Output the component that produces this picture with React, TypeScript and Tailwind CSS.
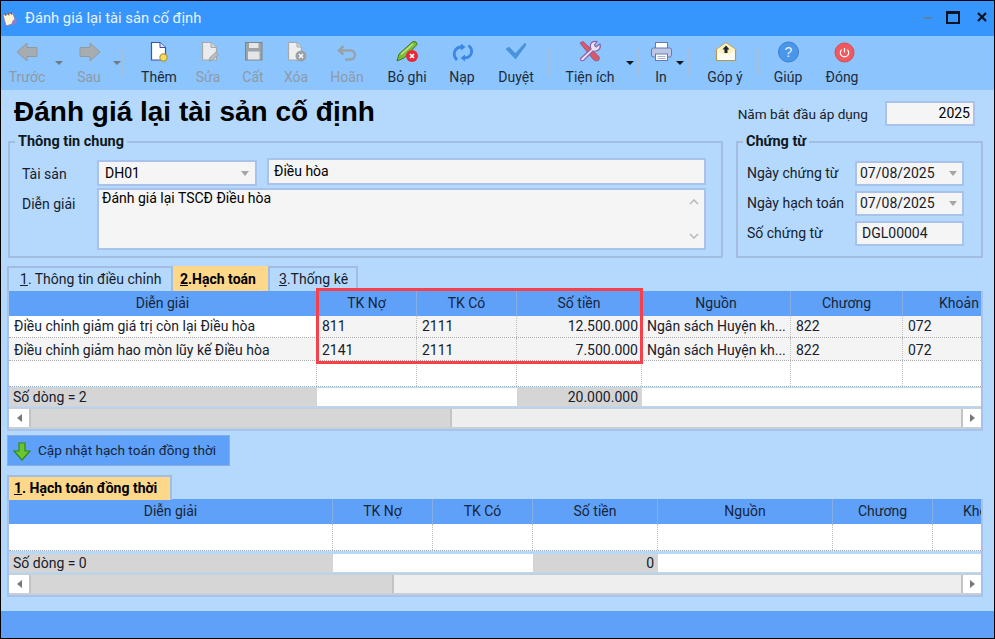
import type { ReactNode } from "react";

const ui = "font-['Roboto','Liberation_Sans',sans-serif]";

const Icons: Record<string, ReactNode> = {
  back: <path d="M2 10 L12 1 V5.5 H22 V14.5 H12 V19 Z" fill="#a7acb0" stroke="#939a9f" />,
  next: <path d="M23 10 L13 1 V5.5 H3 V14.5 H13 V19 Z" fill="#a7acb0" stroke="#939a9f" />,
  add: (
    <>
      <path d="M4.5 0.5 H13 L18.5 5.5 V18 H4.5 Z" fill="#fff" stroke="#3f51a8" strokeWidth="1.2" />
      <path d="M13 0.5 V5.5 H18.5" fill="#dfe6f5" stroke="#3f51a8" />
      <circle cx="16.5" cy="15.5" r="3.6" fill="#f6d95d" stroke="#b29a3a" strokeWidth="1.2" />
    </>
  ),
  edit: (
    <>
      <path d="M6.5 0.5 H15 L20.5 5.5 V18 H6.5 Z" fill="#e9ebec" stroke="#a3a9ad" strokeWidth="1.2" />
      <path d="M15 0.5 V5.5 H20.5" fill="#d3d6d8" stroke="#a3a9ad" />
      <path d="M13 19 L14 15.5 L20 10 L22.5 12.5 L16.5 18 Z" fill="#b9bec1" stroke="#9ba1a5" />
    </>
  ),
  save: (
    <>
      <rect x="4.5" y="0.5" width="16.5" height="17.5" fill="#9da3a7" stroke="#7f868b" />
      <rect x="8" y="1" width="9.5" height="5" fill="#e4e6e7" />
      <rect x="7" y="9.5" width="11.5" height="8" fill="#e3e5e6" />
    </>
  ),
  del: (
    <>
      <path d="M4.5 0.5 H13 L17.5 5 V18 H4.5 Z" fill="#eceeef" stroke="#a3a9ad" strokeWidth="1.2" />
      <path d="M13 0.5 V5 H17.5" fill="#d3d6d8" stroke="#a3a9ad" />
      <circle cx="17" cy="14" r="5.5" fill="#9ba1a5" />
      <path d="M15 12 L19 16 M19 12 L15 16" stroke="#fff" strokeWidth="1.4" />
    </>
  ),
  undo: (
    <path d="M8.5 4 L4 8.5 L8.5 12.5 M4.5 8.5 H15.5 A4.5 4.5 0 0 1 15.5 17.5 H10" fill="none" stroke="#9aa1a6" strokeWidth="2.4" />
  ),
  cancel: (
    <>
      <path d="M2 19 L4 12 L18 -0.5 Q22 -1 22 2.5 L9 16 Z" fill="#7dbb3a" stroke="#3f7a1c" />
      <path d="M6 12.5 L18 2" stroke="#c8e79a" strokeWidth="1.4" />
      <circle cx="17" cy="14" r="6" fill="#e6283a" />
      <path d="M15 12 L19 16 M19 12 L15 16" stroke="#fff" strokeWidth="1.7" />
    </>
  ),
  reload: (
    <>
      <path d="M7 18 C2 13 4 5 12 5" fill="none" stroke="#3b86e6" strokeWidth="2.8" />
      <path d="M11 1.5 L15.5 5 L11 8.5 Z" fill="#3b86e6" />
      <path d="M18.5 3.5 C24 8 22 16 14 16" fill="none" stroke="#3b86e6" strokeWidth="2.8" />
      <path d="M15 12.5 L10.5 16 L15 19.5 Z" fill="#3b86e6" />
    </>
  ),
  check: <path d="M2 7 L5 5 L11.5 11.5 L21 1 L22 3 L11.5 17 Z" fill="#4a93dc" stroke="#3f86cf" strokeWidth="0.5" />,
  tools: (
    <g transform="translate(0 -2)">
      <path d="M2 3 L5 1.5 L19.5 15 Q23 19 20 20.5 Q17.5 22 15 19 Z" fill="#e0585f" stroke="#8b5a9e" />
      <path d="M22 4 L18 7 L16.5 5 L19 1.5 Q14 0.5 12.5 4.5 Q12 7 13 9 L2.5 18.5 Q2.5 21.5 5.5 20.5 L15 11 Q19 12 21.5 9 Q23 6.5 22 4 Z" fill="#ece2f4" stroke="#8a63a8" strokeWidth="1.2" />
    </g>
  ),
  print: (
    <g transform="translate(0.5 -2)">
      <rect x="6" y="2.5" width="12" height="7" fill="#fff" stroke="#6a78b0" />
      <rect x="2" y="8" width="20" height="9" rx="2" fill="#bcc7e6" stroke="#6a78b0" />
      <rect x="6" y="14" width="12" height="6.5" fill="#fff" stroke="#6a78b0" />
      <path d="M8 16.5 H16 M8 18.5 H16" stroke="#a7b1cf" />
    </g>
  ),
  mail: (
    <>
      <path d="M3.5 7.5 L13 1 L22.5 7.5 V18.5 H3.5 Z" fill="#fffdf2" stroke="#b79a45" strokeWidth="1.2" />
      <path d="M3.5 7.5 L13 1 L22.5 7.5 L17 12 H9 Z" fill="#fff0bd" />
      <path d="M13 3.5 L16.5 7.5 H14.5 V11 H11.5 V7.5 H9.5 Z" fill="#1d2430" />
    </>
  ),
  help: (
    <>
      <circle cx="12.5" cy="10" r="10" fill="#4a96ea" stroke="#3b7fd0" />
      <text x="12.5" y="15" textAnchor="middle" fontSize="14" fill="#e8f2fd" fontFamily="Liberation Sans">?</text>
    </>
  ),
  power: (
    <>
      <circle cx="14.5" cy="10.5" r="9.5" fill="#ee5a5f" stroke="#e0484e" />
      <path d="M11.7 7.6 A4.2 4.2 0 1 0 17.3 7.6" fill="none" stroke="#fff" strokeWidth="1.2" />
      <path d="M14.5 6 V10.5" stroke="#fff" strokeWidth="1.2" />
    </>
  ),
};

function Tool({ w, icon, label, off }: { w: string; icon: string; label: string; off?: boolean }) {
  return (
    <div className={`${w} flex shrink-0 flex-col items-center`}>
      <svg viewBox="0 0 24 24" className="h-6 w-6 overflow-visible">
        {Icons[icon]}
      </svg>
      <span className={`mt-[2px] text-[14px] leading-[19px] ${off ? "text-[#8f9aa6]" : "text-[#1c2b3a]"}`}>{label}</span>
    </div>
  );
}

function Caret({ w, off }: { w: string; off?: boolean }) {
  return (
    <div className={`${w} flex shrink-0 justify-center pt-[19px]`}>
      <div
        className={`h-0 w-0 shrink-0 border-x-[4px] border-t-[4px] border-x-transparent ${off ? "border-t-[#6f7b86]" : "border-t-[#10181f]"}`}
      />
    </div>
  );
}

function Sep() {
  return <div className="mt-[6px] h-[29px] w-[2px] shrink-0 bg-[#a4bfdc]" />;
}

const fieldBorder = "border-2 border-[#a9c2ec] bg-[#f5f5f5]";

function Arrow() {
  return <div className="h-0 w-0 border-x-[4px] border-t-[5px] border-x-transparent border-t-[#a5a5a5]" />;
}

function DateField({ value }: { value: string }) {
  return (
    <div className={`flex h-[25px] w-[109px] items-center justify-between pl-[3px] pr-[5px] text-[14px] ${fieldBorder}`}>
      <span>{value}</span>
      <Arrow />
    </div>
  );
}

function Legend({ children }: { children: ReactNode }) {
  return (
    <span className="absolute left-[5px] top-[-10px] bg-[#b5d9fd] px-[3px] text-[14.5px] font-bold leading-[18px] text-[#101820]">
      {children}
    </span>
  );
}

type Col = { title: string; w: string; right?: boolean };

const cols1: Col[] = [
  { title: "Diễn giải", w: "w-[308px]" },
  { title: "TK Nợ", w: "w-[100px]" },
  { title: "TK Có", w: "w-[100px]" },
  { title: "Số tiền", w: "w-[125px]", right: true },
  { title: "Nguồn", w: "w-[149px]" },
  { title: "Chương", w: "w-[112px]" },
  { title: "Khoản", w: "w-[112px]" },
];

const cols2: Col[] = [
  { title: "Diễn giải", w: "w-[324px]" },
  { title: "TK Nợ", w: "w-[100px]" },
  { title: "TK Có", w: "w-[100px]" },
  { title: "Số tiền", w: "w-[125px]", right: true },
  { title: "Nguồn", w: "w-[175px]" },
  { title: "Chương", w: "w-[100px]" },
  { title: "Khoản", w: "w-[100px]" },
];

function Header({ cols }: { cols: Col[] }) {
  return (
    <div className="flex h-[25px] overflow-hidden bg-[#5fa0f9]">
      {cols.map((c) => (
        <div
          key={c.title}
          className={`${c.w} shrink-0 overflow-hidden whitespace-nowrap border-r border-[#86aee4] text-center text-[14px] leading-[25px] text-[#16263a] last:border-r-0`}
        >
          {c.title}
        </div>
      ))}
    </div>
  );
}

function Row({ cols, cells, h, lh, firstBg }: { cols: Col[]; cells: string[]; h: string; lh: string; firstBg?: string }) {
  return (
    <div className={`flex ${h} overflow-hidden border-b border-dotted border-[#a9a9a9]`}>
      {cols.map((c, i) => (
        <div
          key={c.title}
          className={`${c.w} ${lh} shrink-0 overflow-hidden whitespace-nowrap border-r border-dotted border-[#bdbdbd] text-[14px] text-[#16202c] last:border-r-0 ${
            c.right ? "pl-[5px] pr-[3px] text-right" : "px-[5px]"
          } ${i === 0 ? firstBg ?? "" : cells[i] ? "bg-[#f4f4f4]" : ""}`}
        >
          {cells[i]}
        </div>
      ))}
    </div>
  );
}

function Footer({ first, total, mt, w1, w2, w3 }: { first: string; total: string; mt: string; w1: string; w2: string; w3: string }) {
  return (
    <div className={`${mt} flex h-[18px] text-[14px] leading-[18px] text-[#16202c]`}>
      <div className={`${w1} shrink-0 bg-[#d5d5d5] pl-[4px]`}>{first}</div>
      <div className={`${w2} shrink-0 bg-white`} />
      <div className={`${w3} shrink-0 bg-[#d5d5d5] pr-[4px] text-right`}>{total}</div>
      <div className="flex-1 bg-white" />
    </div>
  );
}

function Scroll({ thumb }: { thumb: string }) {
  return (
    <div className="mt-[1px] flex h-[22px] border-y-2 border-[#c9cfd6] bg-[#eeeeee]">
      <div className="flex w-[20px] items-center justify-center bg-white">
        <div className="h-0 w-0 border-y-[4px] border-r-[5px] border-y-transparent border-r-[#777]" />
      </div>
      <div className={`${thumb} border-x-2 border-[#c4c4c4] bg-[#d6d6d6]`} />
      <div className="flex-1" />
      <div className="flex w-[20px] items-center justify-center border-l-2 border-[#c4c4c4] bg-white">
        <div className="h-0 w-0 border-y-[4px] border-l-[5px] border-y-transparent border-l-[#777]" />
      </div>
    </div>
  );
}

export default function App() {
  return (
    <div className={`flex h-[639px] w-[995px] flex-col overflow-hidden border border-black bg-[#b5d9fd] ${ui}`}>
      {/* title bar */}
      <div className="flex h-[35px] shrink-0 items-center bg-[#3795fe] pl-[1px] pr-[7px]">
        <svg viewBox="0 0 16 16" className="h-[16px] w-[16px] shrink-0">
          <path d="M1 4 L11 2 L14 12 L4 15 Z" fill="#fff6d6" stroke="#8a7fb8" />
          <path d="M3 2 L4 5 M6 1.5 L7 4.5 M9 1 L10 4" stroke="#6f5a3a" />
          <path d="M11 9 L15 8 L14 13 L9 14 Z" fill="#8f7ec8" />
        </svg>
        <span className="ml-[7px] text-[14.75px] text-[#e8f2ff]">Đánh giá lại tài sản cố định</span>
        <div className="ml-auto flex items-center">
          <div className="mb-[2px] h-[2px] w-[8px] bg-[#5c7fa8]" />
          <div className="mb-[2px] ml-[14px] h-[13px] w-[14px] border-2 border-t-[3px] border-[#0a1420]" />
          <svg viewBox="0 0 10 10" className="mb-[3px] ml-[17px] h-[10px] w-[10px]">
            <path d="M1 1 L9 9 M9 1 L1 9" stroke="#0a1420" strokeWidth="2.2" />
          </svg>
        </div>
      </div>

      {/* toolbar */}
      <div className="flex h-[54px] shrink-0 bg-[#8cc4fd] pl-[1px] pt-[6px]">
        <Tool w="w-[50px]" icon="back" label="Trước" off />
        <Caret w="w-[14px]" off />
        <Tool w="w-[46px]" icon="next" label="Sau" off />
        <Caret w="w-[10px]" off />
        <Sep />
        <div className="w-[11px] shrink-0" />
        <Tool w="w-[48px]" icon="add" label="Thêm" />
        <Tool w="w-[50px]" icon="edit" label="Sửa" off />
        <Tool w="w-[40px]" icon="save" label="Cất" off />
        <Tool w="w-[46px]" icon="del" label="Xóa" off />
        <Tool w="w-[56px]" icon="undo" label="Hoãn" off />
        <Tool w="w-[64px]" icon="cancel" label="Bỏ ghi" />
        <Tool w="w-[46px]" icon="reload" label="Nạp" />
        <Tool w="w-[62px]" icon="check" label="Duyệt" />
        <Sep />
        <div className="w-[3px] shrink-0" />
        <Tool w="w-[76px]" icon="tools" label="Tiện ích" />
        <Caret w="w-[4px]" />
        <div className="w-[5px] shrink-0" />
        <Sep />
        <div className="w-[4px] shrink-0" />
        <Tool w="w-[36px]" icon="print" label="In" />
        <Caret w="w-[2px]" />
        <div className="w-[7px] shrink-0" />
        <Sep />
        <div className="w-[3px] shrink-0" />
        <Tool w="w-[64px]" icon="mail" label="Góp ý" />
        <Sep />
        <Tool w="w-[58px]" icon="help" label="Giúp" />
        <Tool w="w-[50px]" icon="power" label="Đóng" />
      </div>

      {/* content */}
      <div className="relative flex min-h-0 flex-1 flex-col pl-[6px] pr-[11px]">
        <div className="flex h-[51px] shrink-0 items-start">
          <h1 className="ml-[7px] mt-[4px] font-['Liberation_Sans',sans-serif] text-[28px] font-bold leading-[36px] text-black">
            Đánh giá lại tài sản cố định
          </h1>
          <span className="ml-auto mt-[14px] text-[13.6px] leading-[20px] text-[#16202c]">Năm bắt đầu áp dụng</span>
          <div
            className={`ml-[17px] mr-[8px] mt-[11px] h-[25px] w-[90px] pr-[3px] text-right text-[14px] leading-[21px] ${fieldBorder}`}
          >
            2025
          </div>
        </div>

        <div className="flex h-[118px] shrink-0 pl-[1px]">
          {/* Thông tin chung */}
          <div className="relative h-[117px] w-[715px] shrink-0 border-2 border-[#a3bde0] pl-[12px]">
            <Legend>Thông tin chung</Legend>
            <div className="mt-[17px] flex items-start">
              <span className="w-[75px] pt-[4px] text-[14px] leading-[20px] text-[#16202c]">Tài sản</span>
              <div className={`flex h-[26px] w-[160px] items-center justify-between pl-[6px] pr-[6px] text-[14px] ${fieldBorder}`}>
                <span>DH01</span>
                <Arrow />
              </div>
              <div className={`ml-[10px] mt-[-2px] h-[27px] w-[439px] pl-[5px] text-[14px] leading-[23px] ${fieldBorder}`}>
                Điều hòa
              </div>
            </div>
            <div className="mt-[2px] flex items-start">
              <span className="w-[75px] pt-[6px] text-[14px] leading-[20px] text-[#16202c]">Diễn giải</span>
              <div className={`flex h-[62px] w-[609px] justify-between pl-[3px] text-[14px] leading-[16px] ${fieldBorder}`}>
                <span>Đánh giá lại TSCĐ Điều hòa</span>
                <div className="flex w-[20px] flex-col items-center justify-between py-[9px] text-[#b5b5b5]">
                  <svg viewBox="0 0 10 6" className="h-[6px] w-[10px]">
                    <path d="M1 5 L5 1 L9 5" fill="none" stroke="currentColor" strokeWidth="1.4" />
                  </svg>
                  <svg viewBox="0 0 10 6" className="h-[6px] w-[10px]">
                    <path d="M1 1 L5 5 L9 1" fill="none" stroke="currentColor" strokeWidth="1.4" />
                  </svg>
                </div>
              </div>
            </div>
          </div>

          {/* Chứng từ */}
          <div className="relative ml-[13px] flex h-[117px] w-[247px] shrink-0 flex-col gap-[5px] border-2 border-[#a3bde0] pl-[9px] pt-[18px]">
            <Legend>Chứng từ</Legend>
            <div className="flex items-center text-[14px] text-[#16202c]">
              <span className="w-[108px]">Ngày chứng từ</span>
              <DateField value="07/08/2025" />
            </div>
            <div className="flex items-center text-[14px] text-[#16202c]">
              <span className="w-[108px]">Ngày hạch toán</span>
              <DateField value="07/08/2025" />
            </div>
            <div className="flex items-center text-[14px] text-[#16202c]">
              <span className="w-[108px]">Số chứng từ</span>
              <div className={`h-[25px] w-[109px] pl-[5px] leading-[21px] ${fieldBorder}`}>DGL00004</div>
            </div>
          </div>
        </div>

        {/* tabs */}
        <div className="mt-[7px] flex h-[25px] shrink-0 text-[14px] leading-[22px] text-[#16202c]">
          <div className="w-[166px] border-x-2 border-t-2 border-[#a3bde0] pl-[11px]">
            <u>1</u>. Thông tin điều chỉnh
          </div>
          <div className="w-[95px] bg-[#fdd88a] pl-[7px] pt-[2px] font-bold text-black">
            <u>2</u>.Hạch toán
          </div>
          <div className="w-[90px] border-x-2 border-t-2 border-[#a3bde0] pl-[9px]">
            <u>3</u>.Thống kê
          </div>
        </div>

        {/* grid 1 */}
        <div className="relative shrink-0 border-x-2 border-b-2 border-[#a9c2ec]">
          <Header cols={cols1} />
          <div className="bg-white">
            <Row
              cols={cols1}
              h="h-[22px]"
              lh="leading-[21px]"
              firstBg="bg-white"
              cells={["Điều chỉnh giảm giá trị còn lại Điều hòa", "811", "2111", "12.500.000", "Ngân sách Huyện kh...", "822", "072"]}
            />
            <Row
              cols={cols1}
              h="h-[23px]"
              lh="leading-[24px]"
              firstBg="bg-[#f4f4f4]"
              cells={["Điều chỉnh giảm hao mòn lũy kế Điều hòa", "2141", "2111", "7.500.000", "Ngân sách Huyện kh...", "822", "072"]}
            />
            <Row cols={cols1} h="h-[26px]" lh="leading-[21px]" cells={["", "", "", "", "", "", ""]} />
          </div>
          <Footer mt="mt-[1px]" first="Số dòng = 2" total="20.000.000" w1="w-[308px]" w2="w-[200px]" w3="w-[125px]" />
          <Scroll thumb="w-[423px]" />
          {/* red highlight */}
          <div className="absolute left-[307px] top-[-3px] h-[76px] w-[327px] border-[3px] border-[#f7404a]" />
        </div>

        {/* update button */}
        <div className="mt-[4px] flex h-[31px] w-[223px] shrink-0 items-center border border-[#86aee4] bg-[#5fa0f9] pl-[4px] text-[13.6px] text-[#16263a]">
          <svg viewBox="0 0 20 20" className="h-[20px] w-[20px] shrink-0">
            <path d="M7 2 H13 V10 H18 L10 19 L2 10 H7 Z" fill="#6bc62e" stroke="#2f8a1a" strokeWidth="1.2" />
          </svg>
          <span className="ml-[6px]">Cập nhật hạch toán đồng thời</span>
        </div>

        {/* second tab */}
        <div className="relative z-10 mt-[9px] h-[25px] w-[165px] shrink-0 border-2 border-b-0 border-[#a3bde0] bg-[#fdd88a] pl-[5px] text-[14px] font-bold leading-[23px] text-black">
          <u>1</u>. Hạch toán đồng thời
        </div>

        {/* grid 2 */}
        <div className="mt-[-1px] shrink-0 border-x-2 border-b-2 border-[#a9c2ec]">
          <Header cols={cols2} />
          <div className="bg-white">
            <Row cols={cols2} h="h-[27px]" lh="leading-[21px]" cells={["", "", "", "", "", "", ""]} />
          </div>
          <Footer mt="mt-[3px]" first="Số dòng = 0" total="0" w1="w-[324px]" w2="w-[200px]" w3="w-[125px]" />
          <Scroll thumb="w-[365px]" />
        </div>
      </div>

      {/* status bar */}
      <div className="h-[27px] shrink-0 bg-[#5fa0f9]" />
    </div>
  );
}
